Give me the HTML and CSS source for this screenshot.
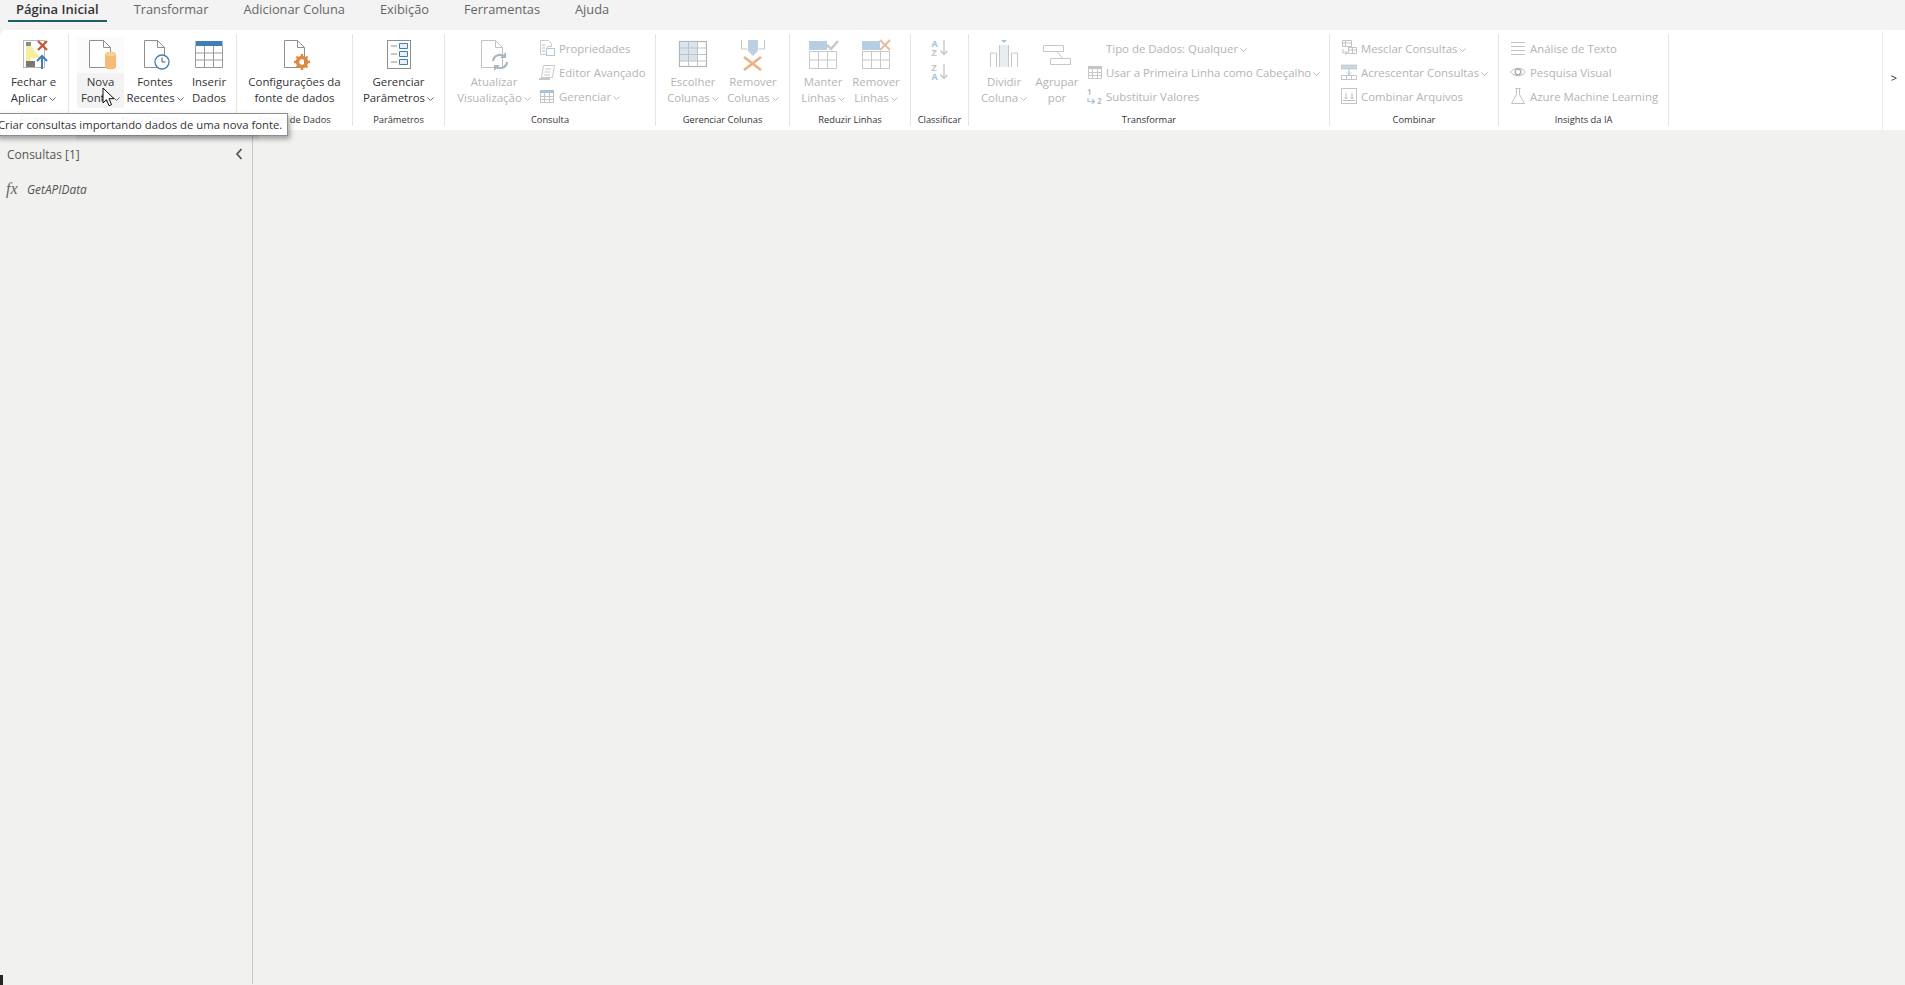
FILE: index.html
```html
<!DOCTYPE html>
<html lang="pt-BR">
<head>
    <meta charset="utf-8">
    <title>Power Query</title>
    <link rel="stylesheet" href="styles.css">
</head>
<body>
    <svg class="defs" width="0" height="0">
        <symbol id="caret" viewBox="0 0 7 4"><path d="M.5 .5l3 3 3-3" fill="none" stroke="currentColor"/></symbol>
    </svg>

    <nav class="tabs">
        <a class="tab active">Página Inicial</a>
        <a class="tab">Transformar</a>
        <a class="tab">Adicionar Coluna</a>
        <a class="tab">Exibição</a>
        <a class="tab">Ferramentas</a>
        <a class="tab">Ajuda</a>
    </nav>

    <div class="ribbon">
        <div class="groups">
            <section class="group g-close">
                <div class="group-body">
                    <div class="btn w67">
                        <svg class="big" viewBox="0 0 32 32">
                            <rect x="5.500" y="1.500" width="21" height="27" fill="#fff" stroke="#b9b9b9"/>
                            <path d="M8 7h5l6 8 3 2v2H13v5H8z" fill="#f6ee9e"/>
                            <rect x="8" y="3" width="5" height="4" fill="#8c8c8c"/>
                            <rect x="8" y="22" width="9" height="6" fill="#777"/>
                            <path d="M20 2l9 9M29 2l-9 9" stroke="#c75b39" stroke-width="2.400"/>
                            <path d="M24 30V18M19 22l5-5 5 5" fill="none" stroke="#3f7fb5" stroke-width="2"/>
                        </svg>
                        <span>Fechar e</span>
                        <span>Aplicar<svg class="caret"><use href="#caret"/></svg></span>
                    </div>
                </div>
                <div class="group-label">Fechar</div>
            </section>

            <section class="group g-sources">
                <div class="group-body">
                    <div class="btn w47 hovered">
                        <svg class="big" viewBox="0 0 32 32">
                            <path d="M4.500 1.500h14l7 7v20h-21z" fill="#fff" stroke="#8f8f8f"/>
                            <path d="M18.500 1.500v7h7" fill="none" stroke="#8f8f8f"/>
                            <path d="M20 15c0-3 11-3 11 0v13c0 3-11 3-11 0z" fill="#f6bb76"/>
                            <ellipse cx="25.500" cy="15" rx="5.500" ry="2" fill="#f9cf9d"/>
                        </svg>
                        <span>Nova</span>
                        <span>Fonte<svg class="caret"><use href="#caret"/></svg></span>
                    </div>
                    <div class="btn w62">
                        <svg class="big" viewBox="0 0 32 32">
                            <path d="M5.500 1.500h13l7 7v20h-20z" fill="#fff" stroke="#8f8f8f"/>
                            <path d="M18.500 1.500v7h7" fill="none" stroke="#8f8f8f"/>
                            <circle cx="23" cy="23" r="7" fill="#fff" stroke="#3f7fb5" stroke-width="1.300"/>
                            <path d="M23 18.500V23h3.500" fill="none" stroke="#555"/>
                        </svg>
                        <span>Fontes</span>
                        <span>Recentes<svg class="caret"><use href="#caret"/></svg></span>
                    </div>
                    <div class="btn w46">
                        <svg class="big" viewBox="0 0 32 32">
                            <rect x="2.500" y="2" width="27" height="5" fill="#3f7fb5"/>
                            <path d="M2.500 7v21.500h27V7M2.500 14h27M2.500 21h27M11.500 7v21.500M20.500 7v21.500" fill="none" stroke="#9a9a9a"/>
                        </svg>
                        <span>Inserir</span>
                        <span>Dados</span>
                    </div>
                </div>
                <div class="group-label">Nova Consulta</div>
            </section>

            <section class="group g-settings">
                <div class="group-body">
                    <div class="btn w115">
                        <svg class="big" viewBox="0 0 32 32">
                            <path d="M5.500 1.500h13l7 7v20h-20z" fill="#fff" stroke="#8f8f8f"/>
                            <path d="M18.500 1.500v7h7" fill="none" stroke="#8f8f8f"/>
                            <circle cx="23" cy="23" r="4.500" fill="none" stroke="#df8a3e" stroke-width="3.500"/>
                            <path d="M23 15v4M23 27v4M15 23h4M27 23h4M17.500 17.500l2.500 2.500M26 26l2.500 2.500M28.500 17.500L26 20M20 26l-2.500 2.500" stroke="#df8a3e" stroke-width="2.400"/>
                        </svg>
                        <span>Configurações da</span>
                        <span>fonte de dados</span>
                    </div>
                </div>
                <div class="group-label">Fontes de Dados</div>
            </section>

            <section class="group g-params">
                <div class="group-body">
                    <div class="btn w91">
                        <svg class="big" viewBox="0 0 32 32">
                            <rect x="4.500" y="1.500" width="23" height="28" fill="#fff" stroke="#8f8f8f"/>
                            <path d="M8 7h6M8 15h6M8 23h6" stroke="#8f8f8f"/>
                            <path d="M16.500 4.500h8v5h-8zM16.500 12.500h8v5h-8zM16.500 20.500h8v5h-8z" fill="#e8f0f8" stroke="#3f7fb5"/>
                        </svg>
                        <span>Gerenciar</span>
                        <span>Parâmetros<svg class="caret"><use href="#caret"/></svg></span>
                    </div>
                </div>
                <div class="group-label">Parâmetros</div>
            </section>

            <section class="group g-query off">
                <div class="group-body">
                    <div class="btn w82">
                        <svg class="big" viewBox="0 0 32 32">
                            <path d="M3.500 1.500h14l7 7v20h-21z" fill="#fff" stroke="#c2c2c2"/>
                            <path d="M17.500 1.500v7h7" fill="none" stroke="#c2c2c2"/>
                            <path d="M15 22a7 7 0 0 1 12-4M29 23a7 7 0 0 1-12 4" fill="none" stroke="#a9b7c4" stroke-width="2.200"/>
                            <path d="M28 13v6h-6zM16 32v-6h6z" fill="#a9b7c4"/>
                        </svg>
                        <span>Atualizar</span>
                        <span>Visualização<svg class="caret"><use href="#caret"/></svg></span>
                    </div>
                    <div class="rows">
                        <div class="row">
                            <svg class="small" viewBox="0 0 16 16"><path d="M1.500 .5h8l3 3v3h-4v8h-7z" fill="#fff" stroke="#ccc"/><rect x="7.500" y="8.500" width="8" height="7" fill="#fff" stroke="#b4c6d8"/><path d="M3 5h3M3 8h3M3 11h3" stroke="#bbb"/></svg>
                            Propriedades
                        </div>
                        <div class="row">
                            <svg class="small" viewBox="0 0 16 16"><path d="M4.500 1.500h11l-2 12h-11z" fill="#fff" stroke="#c8c8c8"/><path d="M6 5h6M5.500 8h6M5 11h6" stroke="#c8c8c8"/><path d="M0 14h11v2H0z" fill="#c8c8c8"/></svg>
                            Editor Avançado
                        </div>
                        <div class="row">
                            <svg class="small" viewBox="0 0 16 16"><rect x="1" y="2" width="14" height="3" fill="#a9c2da"/><path d="M1.500 5v9.500h13V5M1.500 8.500h13M1.500 11.500h13M5.500 5v9.500M10.500 5v9.500" fill="none" stroke="#c4c4c4"/></svg>
                            <span>Gerenciar<svg class="caret"><use href="#caret"/></svg></span>
                        </div>
                    </div>
                </div>
                <div class="group-label">Consulta</div>
            </section>

            <section class="group g-cols off">
                <div class="group-body">
                    <div class="btn w62">
                        <svg class="big" viewBox="0 0 32 32">
                            <rect x="2.500" y="2.500" width="27" height="25" fill="#fff" stroke="#b4b4b4" stroke-width="1.200"/>
                            <rect x="3" y="3" width="17" height="19" fill="#d9e4ef"/>
                            <path d="M2.500 9h27M2.500 15.500h27M2.500 22h27M11.500 2.500v25M20.500 2.500v25" stroke="#c2c2c2"/>
                        </svg>
                        <span>Escolher</span>
                        <span>Colunas<svg class="caret"><use href="#caret"/></svg></span>
                    </div>
                    <div class="btn w58">
                        <svg class="big" viewBox="0 0 32 32">
                            <path d="M4.500 1v9h6M27.500 1v9h-6" fill="none" stroke="#c4c4c4"/>
                            <path d="M11 1h10v11l-5 5-5-5z" fill="#bcd0e2"/>
                            <path d="M7 18l17 13M24 18L7 31" stroke="#eab184" stroke-width="2.600"/>
                        </svg>
                        <span>Remover</span>
                        <span>Colunas<svg class="caret"><use href="#caret"/></svg></span>
                    </div>
                </div>
                <div class="group-label">Gerenciar Colunas</div>
            </section>

            <section class="group g-rows off">
                <div class="group-body">
                    <div class="btn w52">
                        <svg class="big" viewBox="0 0 32 32">
                            <rect x="2" y="2" width="18" height="9" fill="#b6cde2"/>
                            <path d="M2.500 12.500h27v17h-27zM2.500 21h27M11.500 12.500v17M20.500 12.500v17" fill="none" stroke="#c8c8c8"/>
                            <path d="M20 6l4 4 7-8" fill="none" stroke="#c9c9c9" stroke-width="2.500"/>
                        </svg>
                        <span>Manter</span>
                        <span>Linhas<svg class="caret"><use href="#caret"/></svg></span>
                    </div>
                    <div class="btn w54">
                        <svg class="big" viewBox="0 0 32 32">
                            <rect x="2" y="2" width="18" height="9" fill="#b6cde2"/>
                            <path d="M2.500 12.500h27v17h-27zM2.500 21h27M11.500 12.500v17M20.500 12.500v17" fill="none" stroke="#c8c8c8"/>
                            <path d="M20 1l10 10M30 1L20 11" stroke="#e3c3a8" stroke-width="2.400"/>
                        </svg>
                        <span>Remover</span>
                        <span>Linhas<svg class="caret"><use href="#caret"/></svg></span>
                    </div>
                </div>
                <div class="group-label">Reduzir Linhas</div>
            </section>

            <section class="group g-sort off">
                <div class="group-body">
                    <div class="rows icons-only">
                        <div class="row sort">
                            <span class="letters"><span class="blue">A</span><span>Z</span></span>
                            <svg class="sort-arrow" viewBox="0 0 8 16"><path d="M4 0v14M.5 10.500L4 14.500l3.500-4" fill="none" stroke="#c6c6c6" stroke-width="1.300"/></svg>
                        </div>
                        <div class="row sort">
                            <span class="letters"><span>Z</span><span class="blue">A</span></span>
                            <svg class="sort-arrow" viewBox="0 0 8 16"><path d="M4 0v14M.5 10.500L4 14.500l3.500-4" fill="none" stroke="#c6c6c6" stroke-width="1.300"/></svg>
                        </div>
                    </div>
                </div>
                <div class="group-label">Classificar</div>
            </section>

            <section class="group g-transform off">
                <div class="group-body">
                    <div class="btn w62">
                        <svg class="big" viewBox="0 0 32 32">
                            <rect x="12" y="6" width="8" height="22" fill="#e8edf2"/>
                            <path d="M2.500 28V14h6v14M23.500 28V14h6v14M11.500 28V6M20.500 28V6" fill="none" stroke="#c8c8c8"/>
                            <path d="M13 1h6l-3 3z" fill="#a9c2da"/>
                        </svg>
                        <span>Dividir</span>
                        <span>Coluna<svg class="caret"><use href="#caret"/></svg></span>
                    </div>
                    <div class="btn w44">
                        <svg class="big" viewBox="0 0 32 32">
                            <path d="M2.500 6.500h20v6h-20zM9.500 19.500h20v6h-20zM16 12.500l6 7" fill="#fff" stroke="#c8c8c8"/>
                        </svg>
                        <span>Agrupar</span>
                        <span>por</span>
                    </div>
                    <div class="rows">
                        <div class="row tight">
                            <span class="blank"></span>
                            <span>Tipo de Dados: Qualquer<svg class="caret"><use href="#caret"/></svg></span>
                        </div>
                        <div class="row tight">
                            <svg class="small" viewBox="0 0 16 16"><rect x="1" y="2" width="14" height="3" fill="#c4c4c4"/><path d="M1.500 5v9.500h13V5M1.500 8.500h13M1.500 11.500h13M5.500 2v12.500M10.500 2v12.500" fill="none" stroke="#c8c8c8"/></svg>
                            <span>Usar a Primeira Linha como Cabeçalho<svg class="caret"><use href="#caret"/></svg></span>
                        </div>
                        <div class="row tight">
                            <span class="swap">
                                <span class="swap-one">1</span>
                                <svg class="swap-arrow" viewBox="0 0 9 7"><path d="M1 0v3.500h6M5 1l2.500 2.500L5 6" fill="none" stroke="#a9c2da" stroke-width="1.200"/></svg>
                                <span class="swap-two">2</span>
                            </span>
                            Substituir Valores
                        </div>
                    </div>
                </div>
                <div class="group-label">Transformar</div>
            </section>

            <section class="group g-combine off">
                <div class="group-body">
                    <div class="rows">
                        <div class="row">
                            <svg class="small" viewBox="0 0 16 16"><path d="M1.500 .5h9v6h-9zM7.500 7.500h8v6h-8zM1.500 3h9M7.500 10h8M4.500 .5v6M11.500 7.500v6" fill="#fff" stroke="#c4c4c4"/><path d="M2 9v4h4M4.500 11l2 2-2 2" fill="none" stroke="#a9c2da"/></svg>
                            <span>Mesclar Consultas<svg class="caret"><use href="#caret"/></svg></span>
                        </div>
                        <div class="row">
                            <svg class="small" viewBox="0 0 16 16"><rect x="0" y="1" width="16" height="4" fill="#c9d8e6" stroke="#bbb" stroke-width=".6"/><path d="M.5 11.500h15v4H.5zM5.500 11.500v4M10.500 11.500v4" fill="none" stroke="#c4c4c4"/><path d="M8 5v6M6 8.500l2 2 2-2" fill="none" stroke="#a9c2da"/></svg>
                            <span>Acrescentar Consultas<svg class="caret"><use href="#caret"/></svg></span>
                        </div>
                        <div class="row">
                            <svg class="small" viewBox="0 0 16 16"><rect x=".5" y=".5" width="15" height="15" fill="#fff" stroke="#c4c4c4"/><path d="M2 12.500h12M5 5v6M3.500 9.500L5 11l1.500-1.500M11 5v6M9.500 9.500L11 11l1.500-1.500" fill="none" stroke="#bbb"/></svg>
                            Combinar Arquivos
                        </div>
                    </div>
                </div>
                <div class="group-label">Combinar</div>
            </section>

            <section class="group g-insights off">
                <div class="group-body">
                    <div class="rows">
                        <div class="row">
                            <svg class="small" viewBox="0 0 16 16"><path d="M1 2.500h14M1 6.500h14M1 10.500h14M1 14.500h14" stroke="#c4c4c4"/></svg>
                            Análise de Texto
                        </div>
                        <div class="row">
                            <svg class="small" viewBox="0 0 16 16"><path d="M.5 8c4-5 11-5 15 0-4 5-11 5-15 0z" fill="#fff" stroke="#bbb"/><circle cx="8" cy="8" r="2.800" fill="none" stroke="#aaa" stroke-width="1.300"/></svg>
                            Pesquisa Visual
                        </div>
                        <div class="row">
                            <svg class="small" viewBox="0 0 16 16"><path d="M5.500 .5h5M6.500 .5v6l-5 9h13l-5-9v-6" fill="none" stroke="#c0c0c0"/></svg>
                            Azure Machine Learning
                        </div>
                    </div>
                </div>
                <div class="group-label">Insights da IA</div>
            </section>
        </div>
        <div class="more">&gt;</div>
    </div>

    <div class="workspace">
        <aside class="queries">
            <div class="queries-head">
                <span>Consultas [1]</span>
                <svg class="collapse" viewBox="0 0 8 12"><path d="M6.500 1L2 6l4.500 5" fill="none" stroke="#555" stroke-width="1.800"/></svg>
            </div>
            <div class="query-item">
                <span class="fx">fx</span>
                <span class="query-name">GetAPIData</span>
            </div>
        </aside>
    </div>

    <div class="tooltip">Criar consultas importando dados de uma nova fonte.</div>
    <svg class="cursor" viewBox="0 0 13 20"><path d="M1 1v15l3.500-3.300 2.500 6 2.500-1-2.500-6H12z" fill="#fff" stroke="#111"/></svg>
    <div class="corner"></div>
</body>
</html>
```

FILE: styles.css
```css
* {
    box-sizing: border-box;
}

html, body {
    height: 100%;
}

body {
    margin: 0;
    background-color: #f1f1ef;
    font-family: "Open Sans", "Noto Sans", sans-serif;
    font-size: 11.400px;
    color: #333;
    overflow: hidden;
    display: flex;
    flex-direction: column;
}

.defs {
    position: absolute;
}

/* tabs */
.tabs {
    height: 30px;
    flex: none;
    background-color: #f3f3f3;
    display: flex;
    align-items: flex-start;
    padding-left: 8px;
    font-size: 12.800px;
    color: #666;
}

.tab {
    height: 22px;
    line-height: 18px;
    padding: 0 8px;
    margin-right: 19px;
    white-space: nowrap;
}

.tab.active {
    font-size: 13px;
    color: #333;
    font-weight: 600;
    border-bottom: 2px solid #1f5f63;
}

/* ribbon */
.ribbon {
    height: 100px;
    flex: none;
    display: flex;
    background-color: #fff;
    border-top-left-radius: 6px;
    border-bottom-left-radius: 6px;
}

.groups {
    flex: 1;
    display: flex;
    padding: 4px 0;
}

.more {
    width: 23px;
    flex: none;
    border-left: 1px solid #eee;
    margin-top: 1px;
    background-color: #fff;
    color: #222;
    font-size: 11px;
    text-align: center;
    line-height: 94px;
}

.group {
    display: flex;
    flex-direction: column;
    flex: none;
    border-right: 1px solid #e4e4e4;
}

.group-body {
    height: 78px;
    flex: none;
    display: flex;
}

.group-label {
    height: 14px;
    flex: none;
    text-align: center;
    font-size: 9.300px;
    line-height: 16px;
    color: #333;
    white-space: nowrap;
}

.g-close { width: 69px; }
.g-sources { width: 168px; }
.g-settings { width: 116px; }
.g-params { width: 92px; }
.g-query { width: 211px; }
.g-cols { width: 134px; }
.g-rows { width: 121px; }
.g-sort { width: 58px; }
.g-transform { width: 361px; }
.g-combine { width: 169px; }
.g-insights { width: 170px; }

.g-sources .group-body,
.g-query .group-body { padding-left: 8px; }
.g-cols .group-body { padding-left: 6px; }
.g-rows .group-body { padding-left: 7px; }
.g-transform .group-body { padding-left: 4px; }
.g-combine .group-body,
.g-insights .group-body { padding-left: 11px; }

/* big buttons */
.btn {
    display: flex;
    flex-direction: column;
    align-items: center;
    padding-top: 5px;
    line-height: 16px;
    white-space: nowrap;
    flex: none;
}

.btn > span {
    display: block;
}

.btn .big {
    width: 32px;
    height: 32px;
    margin-bottom: 3px;
    flex: none;
}

.w44 { width: 44px; }
.w46 { width: 46px; }
.w47 { width: 47px; }
.w52 { width: 52px; }
.w54 { width: 54px; }
.w58 { width: 58px; }
.w62 { width: 62px; }
.w67 { width: 67px; }
.w82 { width: 82px; }
.w91 { width: 91px; }
.w115 { width: 115px; }

.btn.hovered {
    background: linear-gradient(#fbfbfb 0, #fbfbfb 36px, #f3f3f3 36px);
    border-radius: 3px;
    margin-top: 3px;
    padding-top: 2px;
    height: 71px;
}

.caret {
    width: 7px;
    height: 4px;
    margin-left: 2px;
    vertical-align: 1px;
    color: #666;
}

.off {
    color: #b4b4b4;
}

.off .group-label {
    color: #333;
}

.off .caret {
    color: #bbb;
}

/* small rows */
.rows {
    padding-top: 2px;
    display: flex;
    flex-direction: column;
}

.g-query .rows {
    margin-left: 4px;
}

.g-transform .rows {
    margin-left: 8px;
}

.row {
    height: 24px;
    display: flex;
    align-items: center;
    gap: 4px;
    white-space: nowrap;
}

.row.tight {
    gap: 3px;
}

.small {
    width: 16px;
    height: 16px;
    flex: none;
}

.blank {
    width: 16px;
    flex: none;
}

.icons-only {
    width: 100%;
    align-items: center;
}

.row.sort {
    gap: 2px;
}

.letters {
    display: flex;
    flex-direction: column;
    font-size: 9px;
    font-weight: 700;
    line-height: 9px;
    color: #c6c6c6;
}

.letters .blue {
    color: #a9c2da;
}

.sort-arrow {
    width: 8px;
    height: 16px;
}

.swap {
    width: 16px;
    height: 18px;
    display: flex;
    flex-wrap: wrap;
    align-items: flex-end;
    font-size: 8px;
    font-weight: 700;
    line-height: 9px;
    color: #bbb;
}

.swap-one {
    width: 100%;
}

.swap-arrow {
    width: 9px;
    height: 7px;
    margin-right: 1px;
}

/* queries pane */
.workspace {
    flex: 1;
    display: flex;
}

.queries {
    width: 253px;
    border-right: 1px solid #c8c8c8;
    margin-bottom: 1px;
}

.queries-head {
    height: 24px;
    margin-top: 12px;
    padding: 0 9px 0 7px;
    display: flex;
    align-items: center;
    justify-content: space-between;
    font-size: 12px;
    color: #555;
}

.collapse {
    width: 8px;
    height: 12px;
}

.query-item {
    margin-top: 12px;
    padding-left: 6px;
    display: flex;
    align-items: center;
    gap: 9px;
    height: 22px;
}

.fx {
    font-family: "Liberation Serif", serif;
    font-style: italic;
    font-size: 16px;
    color: #666;
    width: 12px;
}

.query-name {
    font-style: italic;
    font-size: 11.900px;
    color: #555;
}

/* overlays */
.tooltip {
    position: absolute;
    left: -4px;
    top: 113px;
    width: 292px;
    height: 23px;
    padding-left: 1px;
    line-height: 22px;
    font-size: 11.300px;
    white-space: nowrap;
    color: #333;
    background-color: rgba(255, 255, 255, 0.93);
    border: 1px solid #8d8d8d;
    box-shadow: 2px 3px 5px rgba(0, 0, 0, 0.35);
}

.tooltip::after {
    content: "";
    position: absolute;
    left: 79px;
    right: 28px;
    top: 100%;
    height: 7px;
    background: linear-gradient(rgba(0, 0, 0, 0.08), transparent);
}

.cursor {
    position: absolute;
    left: 102px;
    top: 87px;
    width: 13px;
    height: 20px;
}

.corner {
    position: absolute;
    left: 0;
    bottom: 0;
    width: 3px;
    height: 10px;
    background-color: #2b2626;
}
```
